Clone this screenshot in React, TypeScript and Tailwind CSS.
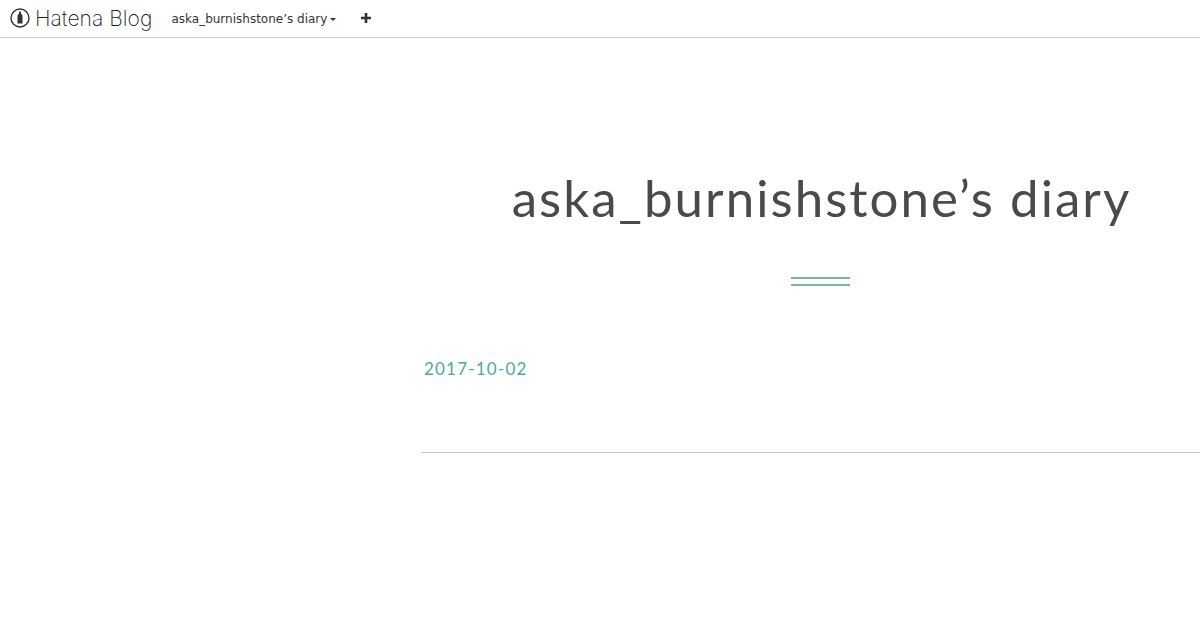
export default function App() {
  return (
    <div className="h-[630px] w-[1200px] overflow-hidden bg-white">
      {/* NAVBAR */}
      <header className="flex h-[38px] items-center border-b border-[#cccccc] bg-white">
        <div className="ml-[10px] flex items-center gap-[5px]">
          <svg className="mb-[1px]" width="20" height="20" viewBox="0 0 20 20" aria-hidden="true">
            <circle cx="10" cy="10" r="9" fill="none" stroke="#333333" strokeWidth="1.4" />
            <path
              d="M9 3.6h2v2.2c1 .6 1.5 1.4 1.5 2.6v7H7.5v-7c0-1.2.5-2 1.5-2.6z"
              fill="#333333"
            />
          </svg>
          <span className="mb-[1px] font-['Inter',sans-serif] text-[21px] font-extralight leading-none tracking-[0.05px] text-[#222222]">
            Hatena Blog
          </span>
        </div>
        <div className="ml-[19px] flex items-center gap-[3px]">
          <span className="font-['DejaVu_Sans',sans-serif] text-[12px] leading-[16px] text-[#333333]">
            aska_burnishstone’s diary
          </span>
          <span className="mt-[1px] h-0 w-0 border-x-[3px] border-t-[3px] border-x-transparent border-t-[#333333]" />
        </div>
        <svg className="mb-[1px] ml-[25px]" width="10" height="10" viewBox="0 0 10 10" aria-hidden="true">
          <path d="M3.7 0h2.6v3.7H10v2.6H6.3V10H3.7V6.3H0V3.7h3.7z" fill="#333333" />
        </svg>
      </header>

      {/* CONTENT */}
      <main className="ml-[421px] w-[800px]">
        <h1 className="ml-[1px] mt-[128px] whitespace-nowrap text-center font-['Lato',sans-serif] text-[51px] font-normal leading-[64px] tracking-[2.05px] text-[#4a4a4a]">
          aska_burnishstone’s diary
        </h1>
        <div className="ml-[370px] mt-[47px] h-[9px] w-[59px] border-y-2 border-[#7fb5a8]" />
        <div className="ml-[3px] mt-[72px] font-['Lato',sans-serif] text-[17px] leading-[22px] tracking-[1.2px] text-[#4ea8a0]">
          2017-10-02
        </div>
        <div className="mt-[72px] border-t border-[#c4c4c4]" />
      </main>
    </div>
  );
}
